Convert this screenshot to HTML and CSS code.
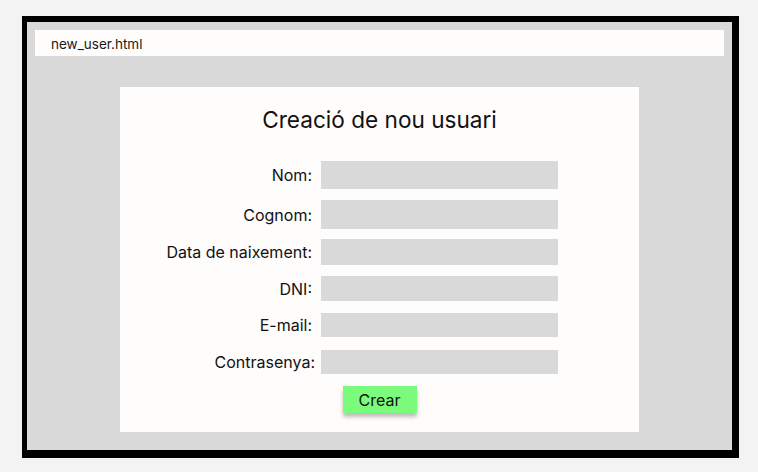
FILE: index.html
```html
<!DOCTYPE html>
<html lang="ca">
<head>
<meta charset="utf-8">
<title>new_user.html</title>
<link rel="stylesheet" href="styles.css">
</head>
<body>
<div class="window">
  <div class="address-bar">new_user.html</div>
  <div class="card">
    <h1 class="title">Creació de nou usuari</h1>
    <form class="form">
      <div class="row row-nom"><label class="label">Nom:</label><span class="field"></span></div>
      <div class="row row-cognom"><label class="label">Cognom:</label><span class="field"></span></div>
      <div class="row row-data"><label class="label">Data de naixement:</label><span class="field"></span></div>
      <div class="row row-dni"><label class="label">DNI:</label><span class="field"></span></div>
      <div class="row row-email"><label class="label">E-mail:</label><span class="field"></span></div>
      <div class="row row-pass"><label class="label">Contrasenya:</label><span class="field"></span></div>
      <div class="actions"><button type="button" class="btn">Crear</button></div>
    </form>
  </div>
</div>
</body>
</html>
```
FILE: styles.css
```css
* { box-sizing: border-box; }
html, body { margin: 0; padding: 0; }
body {
  background: #f3f3f3;
  font-family: Inter, "Noto Sans", sans-serif;
  color: #111;
  width: 758px;
  height: 472px;
  overflow: hidden;
}
.window {
  margin: 16px 0 0 22px;
  width: 717px;
  height: 442px;
  border-style: solid;
  border-color: #000;
  border-width: 6px 7px 8px 5px;
  background: #d9d9d9;
  padding: 8px;
  display: flex;
  flex-direction: column;
  align-items: center;
}
.address-bar {
  align-self: stretch;
  height: 26px;
  background: #fffcfc;
  font-size: 13.5px;
  line-height: 28px;
  padding-left: 16px;
  color: #1a1a1a;
}
.card {
  margin-top: 31px;
  width: 519px;
  height: 345px;
  background: #fffcfc;
  padding-top: 19px;
  display: flex;
  flex-direction: column;
  align-items: center;
}
.title {
  margin: 0;
  font-size: 22.6px;
  line-height: 27px;
  font-weight: 400;
  color: #111;
}
.form {
  margin-top: 28px;
  width: 100%;
  display: flex;
  flex-direction: column;
}
.row {
  display: flex;
  align-items: center;
  gap: 9px;
}
.label {
  width: 192px;
  text-align: right;
  font-size: 16px;
  white-space: nowrap;
  color: #111;
}
.row-pass .label { width: 195px; margin-right: -3px; }
.field {
  width: 237px;
  height: 100%;
  background: #d9d9d9;
}
.row-nom { height: 28px; }
.row-cognom { height: 29px; margin-top: 11px; }
.row-data { height: 26px; margin-top: 10px; }
.row-dni { height: 25px; margin-top: 11px; }
.row-email { height: 24px; margin-top: 12px; }
.row-pass { height: 24px; margin-top: 13px; }
.actions {
  margin-top: 12px;
  display: flex;
  justify-content: center;
}
.btn {
  width: 74px;
  height: 27px;
  border: none;
  padding: 0;
  background: #7bfb7b;
  font-family: Inter, "Noto Sans", sans-serif;
  font-size: 16px;
  color: #111;
  box-shadow: 0 4px 4px rgba(0, 0, 0, 0.25);
}
```
